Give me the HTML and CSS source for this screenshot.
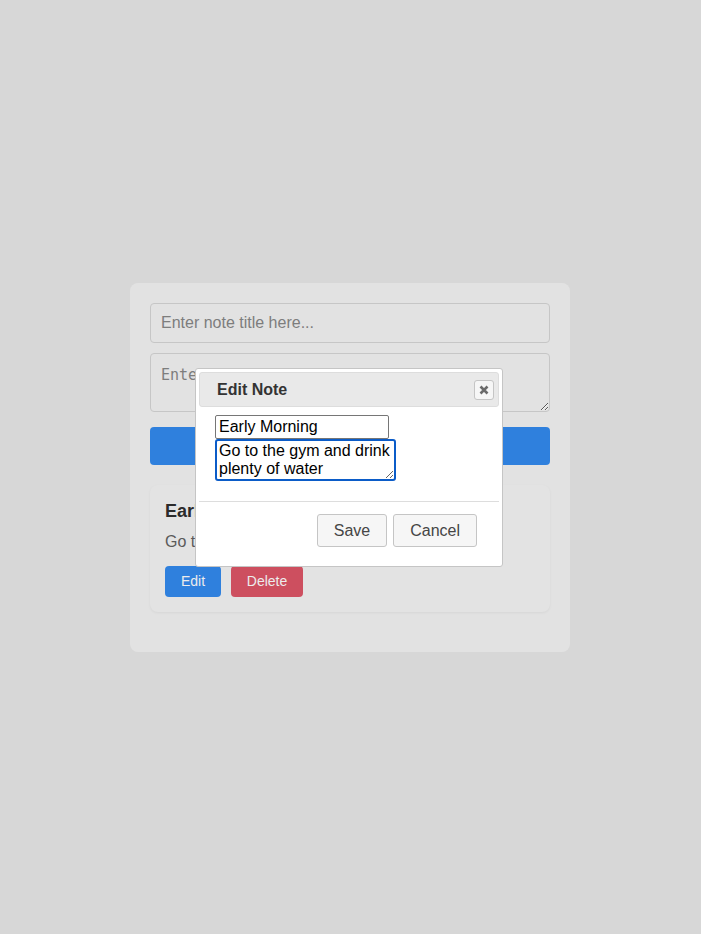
FILE: index.html
```html
<!DOCTYPE html>
<html lang="en">
<head>
<meta charset="utf-8">
<title>Notes</title>
<link rel="stylesheet" href="styles.css">
</head>
<body>
<div class="app">
  <input class="field title-field" type="text" placeholder="Enter note title here...">
  <textarea class="field content-field" placeholder="Enter note content here..."></textarea>
  <button class="add-btn">Add Note</button>
  <div class="note">
    <h3 class="note-title">Early Morning</h3>
    <p class="note-text">Go to the gym and drink plenty of water</p>
    <div class="note-actions">
      <button class="btn btn-edit">Edit</button>
      <button class="btn btn-delete">Delete</button>
    </div>
  </div>
</div>

<div class="dialog">
  <div class="dlg-titlebar">
    <span class="dlg-title">Edit Note</span>
    <button class="dlg-close" aria-label="Close">
      <svg width="10" height="10" viewBox="0 0 10 10"><path d="M1.5 1.5 L8.5 8.5 M8.5 1.5 L1.5 8.5" stroke="#6b6b6b" stroke-width="2.6" stroke-linecap="butt"/></svg>
    </button>
  </div>
  <div class="dlg-content">
    <input class="dlg-input" type="text" value="Early Morning">
    <textarea class="dlg-textarea">Go to the gym and drink plenty of water</textarea>
  </div>
  <div class="dlg-buttons">
    <button class="dlg-btn">Save</button>
    <button class="dlg-btn">Cancel</button>
  </div>
</div>
</body>
</html>
```
FILE: styles.css
```css
* { box-sizing: border-box; }
html, body { margin: 0; padding: 0; }
body {
  background: #d7d7d7;
  font-family: "Liberation Sans", Arial, sans-serif;
  min-height: 934px;
  display: flex;
  align-items: center;
  justify-content: center;
  padding-right: 1px;
  position: relative;
}
.app {
  width: 440px;
  background: #e2e2e2;
  border-radius: 8px;
  padding: 20px 20px 40px;
  display: flex;
  flex-direction: column;
}
.field {
  width: 400px;
  background: #e2e2e2;
  border: 1px solid #c6c6c6;
  border-radius: 4px;
  font-size: 16px;
  color: #333;
  padding: 9px 10px;
  margin: 0;
}
.field::placeholder { color: #7d7d7d; }
.title-field {
  height: 40px;
  font-family: "Liberation Sans", Arial, sans-serif;
  margin-bottom: 10px;
}
.content-field {
  height: 59px;
  font-family: "DejaVu Sans Mono", monospace;
  font-size: 15px;
  line-height: 18px;
  padding-top: 12px;
  resize: vertical;
  margin-bottom: 15px;
}
.add-btn {
  height: 38px;
  border: none;
  border-radius: 4px;
  background: #2f80dd;
  color: #eaeaea;
  font-size: 16px;
  margin-bottom: 20px;
}
.note {
  background: #e3e3e3;
  border-radius: 8px;
  padding: 15px 15px 15px;
  box-shadow: 0 1px 3px rgba(0,0,0,0.05);
}
.note-title {
  margin: 0 0 10px;
  font-size: 18px;
  font-weight: bold;
  color: #2b2b2b;
  line-height: 22px;
}
.note-text {
  margin: 0 0 14px;
  font-size: 16px;
  color: #5a5a5a;
  line-height: 20px;
}
.note-actions { display: flex; gap: 10px; }
.btn {
  height: 31px;
  border: none;
  border-radius: 4px;
  color: #ececec;
  font-size: 14px;
  font-family: "Liberation Sans", Arial, sans-serif;
  padding: 0 15px;
}
.btn-edit { background: #2f80dd; width: 56px; }
.btn-delete { background: #cd4f5f; width: 72px; }

.dialog {
  position: absolute;
  left: 195px;
  top: 368px;
  width: 308px;
  background: #fff;
  border: 1px solid #c5c5c5;
  border-radius: 3px;
  padding: 3px;
}
.dlg-titlebar {
  background: #e9e9e9;
  border: 1px solid #dddddd;
  border-radius: 3px;
  height: 35px;
  padding: 0 4px 0 17px;
  display: flex;
  align-items: center;
  justify-content: space-between;
}
.dlg-title {
  font-weight: bold;
  font-size: 16px;
  color: #333;
}
.dlg-close {
  width: 20px;
  height: 20px;
  background: #f6f6f6;
  border: 1px solid #c5c5c5;
  border-radius: 3px;
  padding: 0;
  display: flex;
  align-items: center;
  justify-content: center;
}
.dlg-content {
  padding: 8px 16px 20px;
  display: flex;
  flex-direction: column;
  align-items: flex-start;
}
.dlg-input {
  width: 174px;
  height: 24px;
  margin: 0;
  border: 1px solid #767676;
  border-radius: 2px;
  padding: 1px 3px;
  font-family: "Liberation Sans", Arial, sans-serif;
  font-size: 16px;
  color: #000;
}
.dlg-textarea {
  width: 181px;
  height: 42px;
  margin: 0;
  border: 2px solid #0b5cc8;
  border-radius: 3px;
  padding: 1px 2px 0;
  font-family: "Liberation Sans", Arial, sans-serif;
  font-size: 16px;
  line-height: 18px;
  color: #000;
  resize: both;
  outline: none;
}
.dlg-buttons {
  border-top: 1px solid #dddddd;
  padding: 4px 22px 8px 6px;
  display: flex;
  justify-content: flex-end;
  gap: 6px;
}
.dlg-btn {
  margin: 8px 0 8px;
  height: 33px;
  background: #f6f6f6;
  border: 1px solid #c5c5c5;
  border-radius: 3px;
  font-family: "Liberation Sans", Arial, sans-serif;
  font-size: 16px;
  color: #454545;
  padding: 0 16px;
}
```
